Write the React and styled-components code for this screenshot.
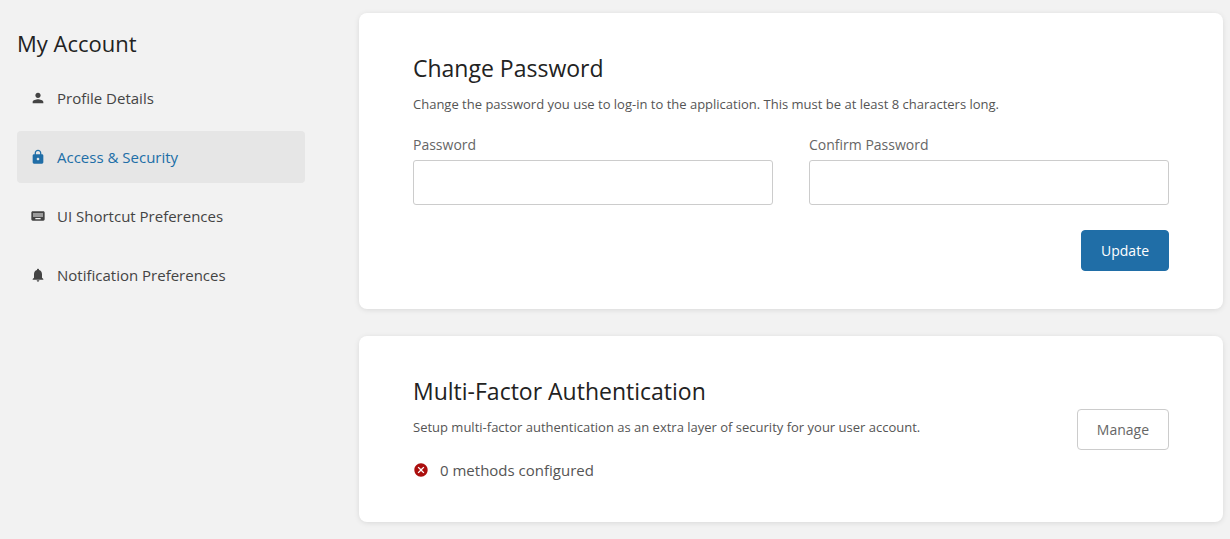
import React from "react";
import styled, { createGlobalStyle } from "styled-components";
import { MdPerson, MdLock, MdKeyboard, MdNotifications, MdCancel } from "react-icons/md";

const GlobalStyle = createGlobalStyle`
  *, *::before, *::after { box-sizing: border-box; }
  body {
    margin: 0;
    background: #f2f2f2;
    color: #444;
    font-family: "Segoe UI", "Open Sans", "Noto Sans", sans-serif;
    font-size: 15px;
    line-height: 24px;
  }
`;

const Layout = styled.div`
  display: grid;
  grid-template-columns: minmax(0, 1fr) minmax(0, 3fr);
  gap: 54px;
  padding: 13px 7px 16px 17px;
`;

const Sidebar = styled.aside`
  padding-top: 14px;
`;

const Heading = styled.h1`
  margin: 0;
  color: #222;
  font-size: 22px;
  line-height: 32px;
  font-weight: 400;
`;

const CardHeading = styled(Heading)`
  font-size: 23px;
`;

const Nav = styled.nav`
  display: flex;
  flex-direction: column;
  gap: 7px;
  margin-top: 13px;
`;

const NavLink = styled.a`
  display: flex;
  align-items: center;
  gap: 11px;
  padding: 14px 13px;
  border-radius: 4px;
  text-decoration: none;
  color: ${(p) => (p.$active ? "#206ea7" : "#444")};
  background: ${(p) => (p.$active ? "#e6e6e6" : "transparent")};
`;

const Main = styled.main`
  display: flex;
  flex-direction: column;
  gap: 27px;
`;

const Card = styled.section`
  padding: 39px 54px 38px;
  border-radius: 8px;
  background: #fff;
  box-shadow: 0 1px 6px -1px rgba(0, 0, 0, 0.14);
`;

const Description = styled.p`
  margin: 9px 0 0;
  color: #555;
  font-size: 13px;
  line-height: 22px;
`;

const Fields = styled.div`
  display: grid;
  grid-template-columns: 1fr 1fr;
  gap: 36px;
  margin-top: 19px;
`;

const Field = styled.div`
  display: flex;
  flex-direction: column;
  gap: 4px;
`;

const Label = styled.label`
  color: #666;
  font-size: 14px;
  line-height: 22px;
`;

const Input = styled.input`
  width: 100%;
  height: 45px;
  padding: 8px 12px;
  border: 1px solid #ccc;
  border-radius: 3px;
  background: #fff;
  font: inherit;
`;

const Actions = styled.div`
  display: flex;
  justify-content: flex-end;
  margin-top: 25px;
`;

const Button = styled.button`
  padding: 8px 19px;
  border: 1px solid ${(p) => (p.$primary ? "#206ea7" : "#ccc")};
  border-radius: 4px;
  background: ${(p) => (p.$primary ? "#206ea7" : "#fff")};
  color: ${(p) => (p.$primary ? "#fff" : "#666")};
  font-family: inherit;
  font-size: 14px;
  line-height: 23px;
  cursor: pointer;
`;

const SplitRow = styled.div`
  display: flex;
  align-items: center;
  justify-content: space-between;
  gap: 36px;
`;

const Status = styled.p`
  display: flex;
  align-items: center;
  gap: 11px;
  margin: 18px 0 0;
  color: #555;
  line-height: 28px;
`;

const ErrorIcon = styled(MdCancel)`
  color: #ab0f0e;
`;

const links = [
  { label: "Profile Details", icon: MdPerson },
  { label: "Access & Security", icon: MdLock, active: true },
  { label: "UI Shortcut Preferences", icon: MdKeyboard },
  { label: "Notification Preferences", icon: MdNotifications },
];

export default function App() {
  return (
    <>
      <GlobalStyle />
      <Layout>
        <Sidebar>
          <Heading>My Account</Heading>
          <Nav aria-label="My Account">
            {links.map(({ label, icon: Icon, active }) => (
              <NavLink key={label} href="#" $active={active} aria-current={active ? "page" : undefined}>
                <Icon size={16} aria-hidden="true" />
                {label}
              </NavLink>
            ))}
          </Nav>
        </Sidebar>
        <Main>
          <Card>
            <CardHeading as="h2">Change Password</CardHeading>
            <Description>
              Change the password you use to log-in to the application. This must be at least 8 characters long.
            </Description>
            <form onSubmit={(e) => e.preventDefault()}>
              <Fields>
                <Field>
                  <Label htmlFor="password">Password</Label>
                  <Input id="password" type="password" autoComplete="new-password" />
                </Field>
                <Field>
                  <Label htmlFor="password-confirm">Confirm Password</Label>
                  <Input id="password-confirm" type="password" autoComplete="new-password" />
                </Field>
              </Fields>
              <Actions>
                <Button type="submit" $primary>Update</Button>
              </Actions>
            </form>
          </Card>
          <Card>
            <SplitRow>
              <div>
                <CardHeading as="h2">Multi-Factor Authentication</CardHeading>
                <Description>
                  Setup multi-factor authentication as an extra layer of security for your user account.
                </Description>
                <Status>
                  <ErrorIcon size={16} aria-hidden="true" />
                  0 methods configured
                </Status>
              </div>
              <Button type="button">Manage</Button>
            </SplitRow>
          </Card>
        </Main>
      </Layout>
    </>
  );
}
